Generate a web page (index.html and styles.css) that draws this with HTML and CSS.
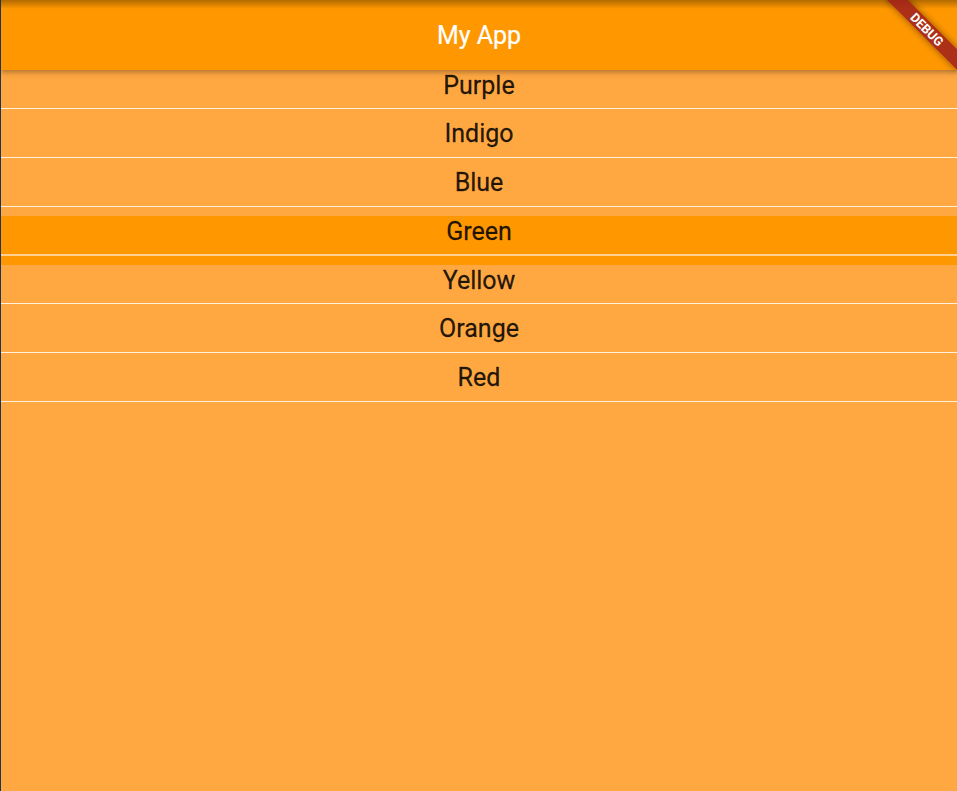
FILE: index.html
```html
<!DOCTYPE html>
<html lang="en">
<head>
<meta charset="utf-8">
<title>My App</title>
<link rel="stylesheet" href="styles.css">
</head>
<body>
<div class="app">
  <header class="appbar"><span class="title">My App</span></header>
  <ul class="list">
    <li class="row first">Purple</li>
    <li class="row">Indigo</li>
    <li class="row">Blue</li>
    <li class="row green">Green</li>
    <li class="row yellow">Yellow</li>
    <li class="row">Orange</li>
    <li class="row">Red</li>
  </ul>
  <div class="banner">DEBUG</div>
</div>
</body>
</html>
```
FILE: styles.css
```css
html, body {
  margin: 0;
  padding: 0;
  height: 100%;
  overflow: hidden;
  background: #1d3550;
}
.app {
  position: relative;
  margin-left: 1px;
  height: 791px;
  background: #FFA842;
  overflow: hidden;
  font-family: Roboto, "Liberation Sans", sans-serif;
}
.appbar {
  position: relative;
  z-index: 2;
  height: 70px;
  display: flex;
  align-items: center;
  justify-content: center;
  background: linear-gradient(rgba(0,0,0,0.3), rgba(0,0,0,0) 9px), #FF9800;
  box-shadow: 0 2px 4px rgba(0,0,0,0.22), 0 4px 7px rgba(0,0,0,0.1);
}
.title {
  color: #fff;
  font-size: 25px;
  font-weight: 400;
  -webkit-text-stroke: 0.2px #fff;
}
.list {
  list-style: none;
  margin: -10px 0 0 0;
  padding: 0;
}
.row {
  height: 48px;
  display: flex;
  align-items: center;
  justify-content: center;
  font-size: 25px;
  color: rgba(0,0,0,0.87);
  -webkit-text-stroke: 0.3px rgba(0,0,0,0.7);
  border-bottom: 1px solid #FFF1DC;
}
.row.first {
  padding-top: 2px;
  height: 46px;
}
.row.green {
  height: 46px;
  padding-top: 1px;
  background: linear-gradient(#FFA842 0, #FFA842 9px, #FF9800 9px);
  border-bottom: 2px solid #FFD08E;
}
.row.yellow {
  height: 46px;
  padding-top: 1px;
  background: linear-gradient(#FF9800 0, #FF9800 9px, #FFA842 9px);
}
.banner {
  position: absolute;
  z-index: 3;
  left: 876px;
  top: 22px;
  width: 100px;
  height: 15px;
  line-height: 15px;
  transform: rotate(45deg);
  background: rgba(160,32,26,0.88);
  box-shadow: 0 0 7px rgba(0,0,0,0.45);
  color: #fff;
  font-size: 12.75px;
  font-weight: 700;
  text-align: center;
}
```
